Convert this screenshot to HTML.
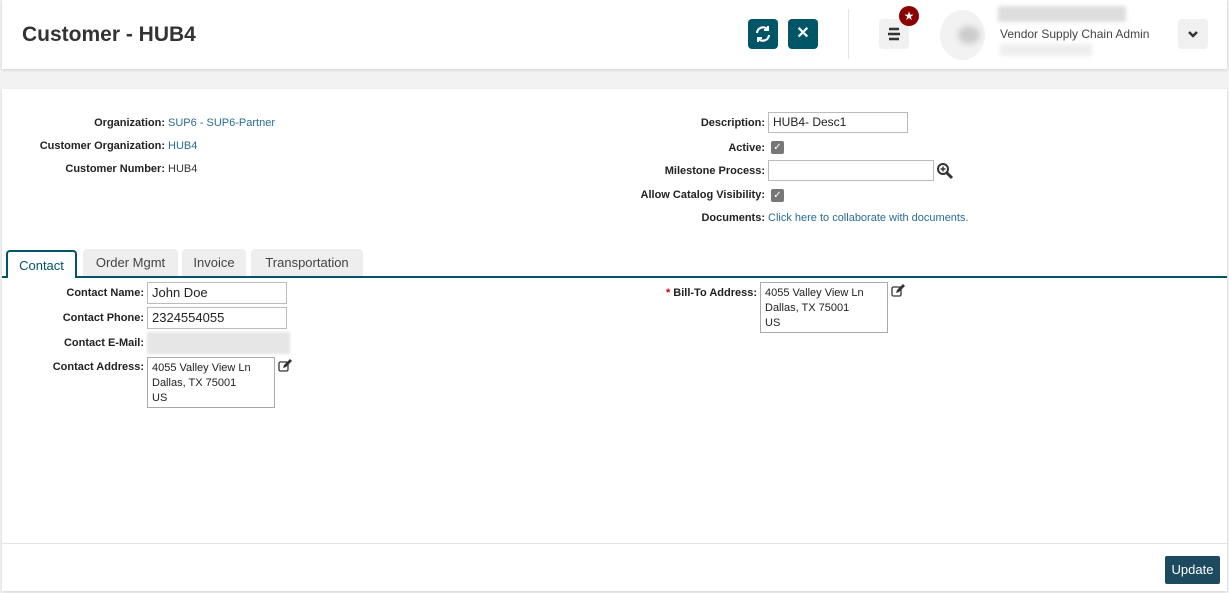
<!DOCTYPE html><html><head><style>
*{box-sizing:border-box}body{margin:0;width:1229px;height:593px;background:#f2f2f2;font-family:"Liberation Sans",sans-serif;font-size:11px;color:#333;position:relative;overflow:hidden}
.a{position:absolute}
.hdr{left:2px;top:0;width:1225px;height:69px;background:#fff;box-shadow:0 1px 3px rgba(0,0,0,.15)}
.btn{width:30px;height:30px;background:#005566;border-radius:4px;color:#fff;text-align:center;line-height:30px;font-size:16px;font-weight:bold}
.main{left:2px;top:89px;width:1225px;height:502px;background:#fff;box-shadow:0 1px 3px rgba(0,0,0,.12)}
.lbl{font-weight:bold;text-align:right;color:#222}
.lnk{color:#2a6b93}
.in{border:1px solid #bbb;background:#fff;font-size:13px;padding:2px 4px;color:#222}
.tab{height:27px;background:#eee;border-radius:4px 4px 0 0;font-size:13px;color:#444;text-align:center;line-height:28px}
.cb{width:13px;height:13px;background:#777;border-radius:2px;color:#fff;font-size:10px;line-height:13px;text-align:center}
.addr{border:1px solid #aaa;font-size:11px;line-height:15px;padding:3px 4px;color:#222}
</style></head><body>
<div class="a hdr"></div>
<div class="a" style="left:22px;top:23px;font-size:21px;font-weight:bold;color:#333">Customer - HUB4</div>
<div class="a btn" style="left:748px;top:19px"><svg width="18" height="18" viewBox="0 0 18 18" style="margin-top:6px" fill="none" stroke="#fff" stroke-width="2.2"><path d="M3 8a6 6 0 0 1 11-3M15 10a6 6 0 0 1-11 3"/><path d="M14 1v4h-4M4 17v-4h4" stroke-width="2"/></svg></div>
<div class="a btn" style="left:788px;top:19px">✕</div>
<div class="a" style="left:848px;top:9px;width:1px;height:50px;background:#e3e3e3"></div>
<div class="a" style="left:879px;top:19px;width:30px;height:30px;background:#f0f0f0;border-radius:4px"><svg width="30" height="30"><path d="M10 10h10M9 15h12M10 20h10" stroke="#333" stroke-width="2.5"/></svg></div>
<div class="a" style="left:899px;top:6px;width:20px;height:20px;border-radius:50%;background:#8b0000;color:#fff;text-align:center;line-height:20px;font-size:12px">★</div>
<div class="a" style="left:940px;top:10px;width:45px;height:50px;border-radius:50%;background:#f2f2f2"></div>
<div class="a" style="left:958px;top:26px;width:22px;height:18px;border-radius:50%;background:#ccc;filter:blur(3px)"></div>
<div class="a" style="left:998px;top:6px;width:128px;height:16px;background:#ddd;filter:blur(2px)"></div>
<div class="a" style="left:1000px;top:27px;font-size:12px;color:#444">Vendor Supply Chain Admin</div>
<div class="a" style="left:1000px;top:44px;width:92px;height:12px;background:#eee;filter:blur(2px)"></div>
<div class="a" style="left:1178px;top:19px;width:30px;height:30px;background:#f0f0f0;border-radius:4px"><svg width="30" height="30"><path d="M11 13l4 4 4-4" stroke="#333" stroke-width="2.5" fill="none"/></svg></div>
<div class="a main"></div>
<div class="a lbl" style="left:0;width:165px;top:117px">Organization:</div><div class="a lnk" style="left:168px;top:117px">SUP6 - SUP6-Partner</div>
<div class="a lbl" style="left:0;width:165px;top:140px">Customer Organization:</div><div class="a lnk" style="left:168px;top:140px">HUB4</div>
<div class="a lbl" style="left:0;width:165px;top:163px">Customer Number:</div><div class="a" style="left:168px;top:163px">HUB4</div>
<div class="a lbl" style="left:500px;width:265px;top:117px">Description:</div><div class="a in" style="left:768px;top:112px;width:140px;height:21px;font-size:12px">HUB4- Desc1</div>
<div class="a lbl" style="left:500px;width:265px;top:142px">Active:</div><div class="a cb" style="left:771px;top:141px">✓</div>
<div class="a lbl" style="left:500px;width:265px;top:165px">Milestone Process:</div><div class="a in" style="left:768px;top:160px;width:166px;height:21px"></div>
<svg class="a" style="left:936px;top:162px" width="18" height="18"><circle cx="7" cy="7" r="5" stroke="#333" stroke-width="2" fill="none"/><path d="M11 11l5 5" stroke="#333" stroke-width="3"/><path d="M4.5 7h5M7 4.5v5" stroke="#333" stroke-width="1.5"/></svg>
<div class="a lbl" style="left:500px;width:265px;top:189px">Allow Catalog Visibility:</div><div class="a cb" style="left:771px;top:189px">✓</div>
<div class="a lbl" style="left:500px;width:265px;top:212px">Documents:</div><div class="a lnk" style="left:768px;top:212px">Click here to collaborate with documents.</div>
<div class="a tab" style="left:6px;top:250px;width:71px;background:#fff;border:2px solid #005566;border-bottom:none;color:#005566">Contact</div>
<div class="a tab" style="left:83px;top:249px;width:95px">Order Mgmt</div>
<div class="a tab" style="left:182px;top:249px;width:64px">Invoice</div>
<div class="a tab" style="left:251px;top:249px;width:112px">Transportation</div>
<div class="a" style="left:2px;top:276px;width:1225px;height:2px;background:#005566"></div>
<div class="a" style="left:8px;top:276px;width:67px;height:2px;background:#fff"></div>
<div class="a lbl" style="left:0;width:144px;top:287px">Contact Name:</div><div class="a in" style="left:147px;top:282px;width:140px;height:22px">John Doe</div>
<div class="a lbl" style="left:0;width:144px;top:312px">Contact Phone:</div><div class="a in" style="left:147px;top:307px;width:140px;height:22px">2324554055</div>
<div class="a lbl" style="left:0;width:144px;top:337px">Contact E-Mail:</div><div class="a" style="left:147px;top:332px;width:143px;height:22px;background:#e6e6e6;filter:blur(1px)"></div>
<div class="a lbl" style="left:0;width:144px;top:361px">Contact Address:</div><div class="a addr" style="left:147px;top:357px;width:128px;height:51px">4055 Valley View Ln<br>Dallas, TX 75001<br>US</div>
<svg class="a" style="left:278px;top:359px" width="14" height="13"><rect x="1" y="3" width="9" height="9" rx="1.5" stroke="#333" stroke-width="1.3" fill="none"/><path d="M5 9l1-3 6-6 2 2-6 6z" fill="#333"/></svg>
<div class="a lbl" style="left:500px;width:257px;top:287px"><span style="color:#c00">*</span> Bill-To Address:</div><div class="a addr" style="left:760px;top:282px;width:128px;height:51px">4055 Valley View Ln<br>Dallas, TX 75001<br>US</div>
<svg class="a" style="left:891px;top:284px" width="14" height="13"><rect x="1" y="3" width="9" height="9" rx="1.5" stroke="#333" stroke-width="1.3" fill="none"/><path d="M5 9l1-3 6-6 2 2-6 6z" fill="#333"/></svg>
<div class="a" style="left:2px;top:543px;width:1225px;height:1px;background:#e3e3e3"></div>
<div class="a" style="left:1165px;top:556px;width:55px;height:28px;background:#1d4a5e;color:#fff;font-size:13px;text-align:center;line-height:28px;border-radius:2px">Update</div>
</body></html>
